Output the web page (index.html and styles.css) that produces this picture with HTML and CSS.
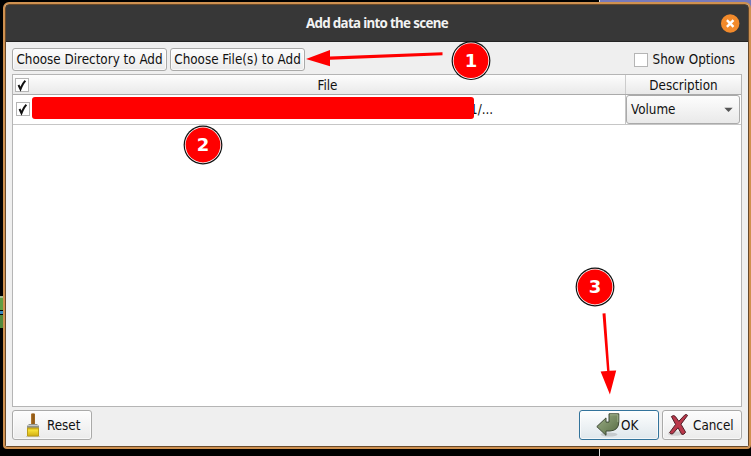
FILE: index.html
```html
<!DOCTYPE html>
<html lang="en">
<head>
<meta charset="utf-8">
<title>Add data into the scene</title>
<link rel="stylesheet" href="styles.css">
</head>
<body>
<div class="desktop">
  <svg class="backdrop" width="751" height="456" viewBox="0 0 751 456">
    <path d="M600 0h151v20h-151z" fill="#777abb"/>
    <path d="M599 0h1v456h-1z" fill="#ddd"/>
    <path d="M0 296h4v14H0z" fill="#5f9e44"/><path d="M0 296h4v2H0z" fill="#a5bd94"/>
    <path d="M0 311h4v3H0z" fill="#3588bd"/><path d="M0 315h4v13H0z" fill="#528a3b"/>
  </svg>
  <main class="window">
    <header class="titlebar">
      <span class="spacer"></span>
      <h1 class="title">Add data into the scene</h1>
      <button class="close" aria-label="Close"><svg width="19" height="19" viewBox="0 0 19 19"><circle cx="9.2" cy="9.5" r="9.2" fill="#f28a2b"/><path d="M5.9 6.2l6.6 6.6M12.5 6.2l-6.6 6.6" stroke="#fff" stroke-width="2.4"/></svg></button>
    </header>
    <div class="content">
      <div class="toolbar">
        <button class="btn dir">Choose Directory to Add</button>
        <button class="btn files">Choose File(s) to Add</button>
        <label class="options"><span class="box"></span>Show Options</label>
      </div>
      <section class="table">
        <div class="row head">
          <div class="cell file-head"><span class="box"><svg width="14" height="14" viewBox="0 0 14 14"><path class="tick" d="M3.5 7l2 4.2C7 7.5 8 5 10.4 2.8"/></svg></span><span class="head-text">File</span></div>
          <div class="cell desc-head">Description</div>
        </div>
        <div class="row item">
          <div class="cell path"><span class="box"><svg width="14" height="14" viewBox="0 0 14 14"><path class="tick" d="M3.5 7l2 4.2C7 7.5 8 5 10.4 2.8"/></svg></span><span class="redaction"></span><span class="path-end">1/...</span></div>
          <div class="cell select">Volume<svg width="9" height="6" viewBox="0 0 9 6"><path d="M.3.7h8.4l-4.2 4.3z" fill="#555"/></svg></div>
        </div>
      </section>
      <footer class="actions">
        <button class="btn reset">
          <svg width="24" height="24" viewBox="0 0 24 24">
            <defs><linearGradient id="gold" x2="0" y2="1"><stop stop-color="#d4b31a"/><stop offset=".3" stop-color="#f5df35"/><stop offset="1" stop-color="#d1ae14"/></linearGradient><linearGradient id="wood"><stop stop-color="#b9803a"/><stop offset=".5" stop-color="#8c5410"/><stop offset="1" stop-color="#a46b25"/></linearGradient></defs>
            <path d="M5 23h14v1H5z" fill="#ccc"/><path d="M10 .7q2-1 4 0v10.3h-4z" fill="url(#wood)"/>
            <path d="M8 11h8l2 2v2H6v-2z" fill="#90938f"/><path d="M7 12.5h10" stroke="#c8cac7"/>
            <path d="M6.5 15h11v8h-11z" fill="url(#gold)" stroke="#bb9c19"/>
          </svg><span>Reset</span>
        </button>
        <span class="spacer"></span>
        <button class="btn ok">
          <svg width="24" height="24" viewBox="0 0 24 24">
            <defs><linearGradient id="leaf" x2="1" y2="1"><stop stop-color="#9caf88"/><stop offset="1" stop-color="#566b42"/></linearGradient></defs>
            <ellipse cx="13" cy="21.5" rx="8.5" ry="2" fill="#c6cbce"/>
            <path d="M13 .8h9.8V9q0 8.6-9 9H10v4.3L.8 13.6 10 4.9v4.2h3z" fill="url(#leaf)" stroke="#3f4a36" stroke-linejoin="round"/>
            <path d="M14 1.8h7.8V9" fill="none" stroke="#a9b996" stroke-width=".8"/>
          </svg><span>OK</span>
        </button>
        <button class="btn cancel">
          <svg width="24" height="24" viewBox="0 0 24 24">
            <ellipse cx="7" cy="20.5" rx="7" ry="2.3" fill="#d2d2d2"/>
            <path d="M3.4 3.5q2.4-2 4 0l3.4 4.8 6-6.4q2-1 2.8.5l-6.6 8.8 4.6 8q-1.4 2.8-3.8 2.2l-3.8-6.6-5.2 6q-2.3.8-3.2-1.2l6-8.2z" fill="#b9384a" stroke="#4f2029" stroke-linejoin="round"/>
          </svg><span>Cancel</span>
        </button>
      </footer>
    </div>
  </main>
  <svg class="annotations" width="751" height="456" viewBox="0 0 751 456">
    <g fill="#f00"><path d="M442.5 52.3v3L330 59.7v6.5L306 59l24-9v6.6z"/><path d="M602.5 313.5l3-.2 4 57.5 6.7-.3-6.3 24-9.3-23 6.5-.4z"/></g>
    <g class="marker"><circle cx="471" cy="60.7" r="19.4" fill="#111"/><circle cx="471" cy="60.7" r="18.2" fill="#fff"/><circle cx="471" cy="60.7" r="17.4" fill="#f00"/><text x="471" y="67">1</text></g>
    <g class="marker"><circle cx="203" cy="145" r="19.4" fill="#111"/><circle cx="203" cy="145" r="18.2" fill="#fff"/><circle cx="203" cy="145" r="17.4" fill="#f00"/><text x="203" y="151">2</text></g>
    <g class="marker"><circle cx="595" cy="287" r="19.4" fill="#111"/><circle cx="595" cy="287" r="18.2" fill="#fff"/><circle cx="595" cy="287" r="17.4" fill="#f00"/><text x="595" y="293">3</text></g>
  </svg>
</div>
</body>
</html>
```
FILE: styles.css
```css
* { box-sizing: border-box; }
body { margin: 0; background: #000; }
.desktop { position: relative; width: 751px; height: 456px; padding: 2px 0 0 3px; overflow: hidden; font: 13.33px "DejaVu Sans Condensed", "DejaVu Sans", sans-serif; color: #111; }
.backdrop, .annotations { position: absolute; left: 0; top: 0; pointer-events: none; }
.window { position: relative; width: 748px; height: 447px; border: 2px solid #cf9150; border-radius: 6px 6px 4px 4px; padding: 1px; background: #efefef; display: flex; flex-direction: column; overflow: hidden; }
.window::after { content: ""; position: absolute; inset: 0; box-shadow: inset 0 0 0 1px #67492b; border-radius: 4px 4px 0 0; pointer-events: none; }
.titlebar { height: 37px; flex: none; display: flex; align-items: center; background: #373737; border-bottom: 1px solid #242424; padding-right: 8px; }
.titlebar .spacer { flex: 0 0 27px; }
.title { flex: 1; margin: 0; text-align: center; color: #f2f2f2; font: bold 13.33px "Noto Sans", sans-serif; letter-spacing: -.67px; }
button { margin: 0; padding: 0; font: inherit; color: inherit; }
.close { border: 0; background: none; width: 19px; height: 19px; }
svg { display: block; }
.content { flex: 1; display: flex; flex-direction: column; padding: 6px; }
.toolbar { height: 23px; display: flex; gap: 3px; }
.btn { border: 1px solid #aaaaa9; border-radius: 3px; background: linear-gradient(#fdfdfd, #ebebeb); box-shadow: inset 0 0 0 1px rgba(255,255,255,.65); white-space: nowrap; }
.dir { width: 155px; }
.files { width: 135px; }
.options { margin-left: auto; margin-right: 7px; display: flex; align-items: center; gap: 5px; }
.box { display: block; width: 14px; height: 14px; border: 1px solid #b5b5b5; background: #fff; flex: none; }
.box svg { margin: -1px; }
.tick { fill: none; stroke: #111; stroke-width: 2; }
.table { height: 333px; margin-top: 3px; border: 1px solid #b5b5b5; background: #fff; }
.row { display: grid; grid-template-columns: 613px 1fr; }
.head { height: 20px; background: linear-gradient(#fdfdfd, #e9e9e9); border-bottom: 1px solid #aaa; }
.cell { display: flex; align-items: center; }
.file-head { border-right: 1px solid #ccc; padding-left: 2px; }
.head-text { flex: 1; text-align: center; padding: 2px 0 0 1px; }
.desc-head { justify-content: center; padding-top: 2px; }
.item { height: 30px; border-bottom: 1px solid #c6c6c6; }
.path { border-right: 1px solid #c6c6c6; padding-left: 3px; }
.path .box { margin-top: -1px; }
.redaction { width: 442px; height: 22px; margin: -3px 0 0 2px; background: #f00; border-radius: 3px; position: relative; z-index: 1; }
.path-end { margin-left: -4px; }
.select { justify-content: space-between; border: 1px solid #aaa; border-radius: 3px; background: linear-gradient(#fdfdfd, #e9e9e9); padding: 0 6px 0 4px; margin-right: 1px; }
.actions { margin-top: 3px; height: 30px; display: flex; gap: 3px; }
.actions .btn { width: 80px; display: flex; align-items: center; }
.actions .btn span { padding-top: 1px; }
.actions .spacer { flex: 1; }
.reset { padding-left: 8px; gap: 2px; }
.ok { padding-left: 16px; gap: 1px; border-color: #32739b; background: linear-gradient(#fdfefe, #dfe7ec); }
.cancel { padding-left: 5px; gap: 1px; }
.marker text { fill: #fff; font: bold 18px "DejaVu Sans", sans-serif; text-anchor: middle; }
```
